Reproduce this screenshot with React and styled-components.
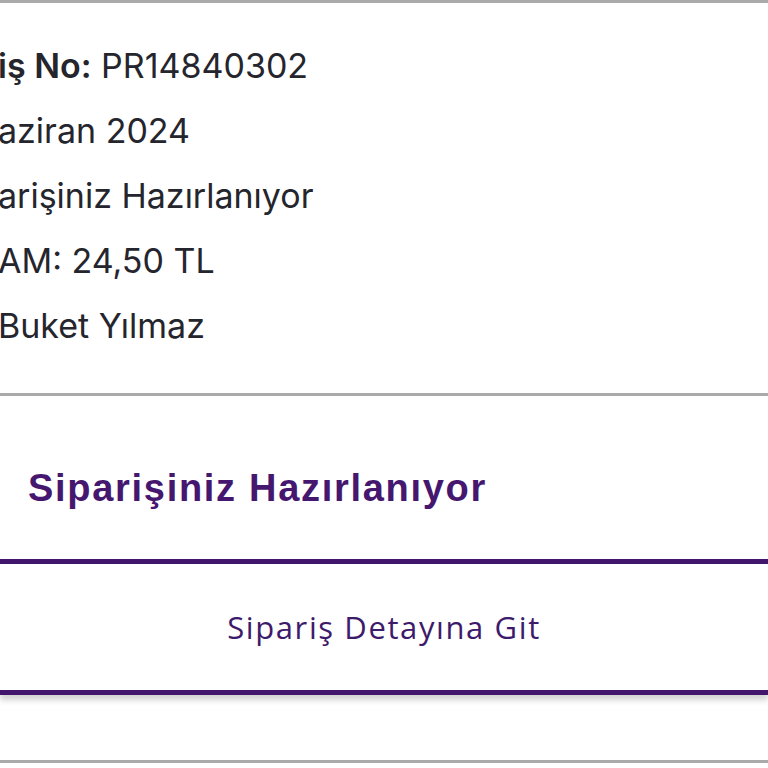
import styled, { createGlobalStyle } from 'styled-components';

const GlobalStyle = createGlobalStyle`
    body {
        margin: 0;
        background: #ffffff;
        overflow: hidden;
    }
`;

const order = {
    no: 'PR14840302',
    date: 'aziran 2024',
    status: 'arişiniz Hazırlanıyor',
    total: 'AM: 24,50 TL',
    buyer: 'Buket Yılmaz',
};

const OrderCard = () => {
    return (
        <Card>
            <InfoList>
                <InfoRow><Label>iş No:</Label> {order.no}</InfoRow>
                <InfoRow>{order.date}</InfoRow>
                <InfoRow>{order.status}</InfoRow>
                <InfoRow>{order.total}</InfoRow>
                <InfoRow>{order.buyer}</InfoRow>
            </InfoList>
            <StatusTitle>Siparişiniz Hazırlanıyor</StatusTitle>
            <DetailButton>Sipariş Detayına Git</DetailButton>
            <Footer />
        </Card>
    );
}

const Card = styled.div`
    width: 100%;
    border-top: 3px solid #aaaaaa;
    border-bottom: 3px solid #aaaaaa;
    background: #ffffff;
`;

const InfoList = styled.div`
    padding: 30px 0 35px 0;
    margin-left: -2px;
    border-bottom: 3px solid #aaaaaa;
`;

const InfoRow = styled.div`
    font-family: Inter, "Liberation Sans", sans-serif;
    font-size: 34px;
    line-height: 65px;
    color: #25252d;
    white-space: nowrap;
`;

const Label = styled.span`
    font-weight: 600;
`;

const StatusTitle = styled.div`
    box-sizing: border-box;
    height: 163px;
    padding: 70px 0 0 28px;
    font-family: "Liberation Sans", Arial, sans-serif;
    font-weight: 700;
    font-size: 38px;
    line-height: 44px;
    letter-spacing: 1.7px;
    color: #45176f;
`;

const DetailButton = styled.div`
    box-sizing: border-box;
    height: 136px;
    display: flex;
    align-items: center;
    justify-content: center;
    border-top: 5px solid #43166d;
    border-bottom: 5px solid #43166d;
    box-shadow: 0 5px 6px rgba(0, 0, 0, 0.18);
    font-family: "Open Sans", sans-serif;
    font-size: 31px;
    letter-spacing: 1.6px;
    color: #3e1a6b;
`;

const Footer = styled.div`
    height: 65px;
`;

export default function App() {
    return (
        <>
            <GlobalStyle />
            <OrderCard />
        </>
    );
}
